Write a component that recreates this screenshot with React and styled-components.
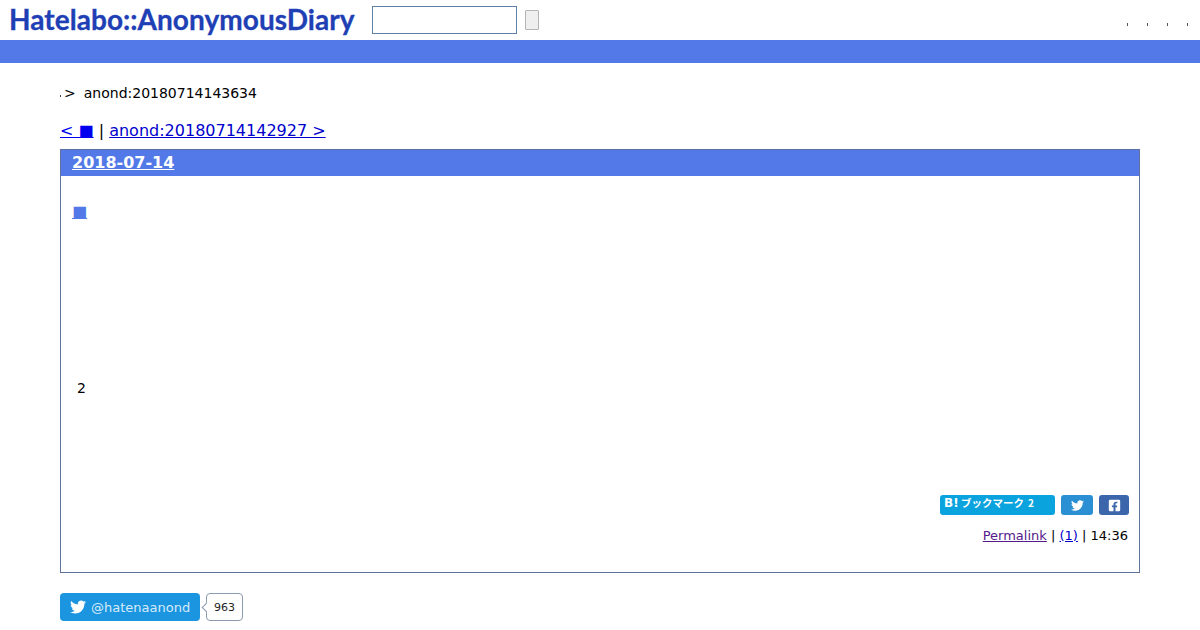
import React from "react";
import styled, { createGlobalStyle } from "styled-components";
import { FaTwitter, FaFacebookSquare } from "react-icons/fa";

const GlobalStyle = createGlobalStyle`
  html, body {
    margin: 0;
    padding: 0;
    background: #fff;
    color: #000;
    font-family: "DejaVu Sans", sans-serif;
    overflow: hidden;
  }
  a {
    text-decoration: none;
  }
`;

const Header = styled.header`
  display: flex;
  align-items: center;
  height: 40px;
  padding: 0 9px;
  box-sizing: border-box;
`;

const Logo = styled.h1`
  margin: 0 0 3px;
  width: 349px;
  font-family: "Lato", sans-serif;
  font-size: 28px;
  font-weight: 700;
  letter-spacing: 0.05px;
  white-space: nowrap;
  color: #1f3fb5;
  -webkit-text-stroke: 0.3px #1f3fb5;
`;

const SearchForm = styled.form`
  display: flex;
  align-items: center;
  margin-left: 14px;
`;

const SearchInput = styled.input`
  width: 145px;
  height: 28px;
  box-sizing: border-box;
  border: 1px solid #5e7fa8;
  background: #fff;
  padding: 0;
`;

const SearchButton = styled.button`
  width: 14px;
  height: 20px;
  margin-left: 8px;
  padding: 0;
  border: 1px solid #b4b4b4;
  border-radius: 1px;
  background: #efefef;
`;

const UserLinks = styled.ul`
  display: flex;
  gap: 19px;
  margin: 8px 3px 0 auto;
  padding: 0;
  list-style: none;
`;

const UserDot = styled.li`
  width: 1px;
  height: 3px;
  background: #555;
`;

const Bar = styled.div`
  height: 23px;
  background: #5279e7;
`;

const Main = styled.main`
  padding: 0 60px;
`;

const Crumbs = styled.div`
  display: flex;
  align-items: center;
  height: 20px;
  margin-top: 20px;
  font-size: 14px;
`;

const CrumbDot = styled.span`
  width: 1px;
  height: 2px;
  margin-top: 6px;
  background: #444;
`;

const CrumbSep = styled.span`
  margin: 0 8px 0 3px;
`;

const Pager = styled.div`
  height: 20px;
  margin-top: 17px;
  margin-bottom: 9px;
  padding-top: 1px;
  box-sizing: border-box;
  font-size: 16px;
  line-height: 20px;
  color: #000;
`;

const Link = styled.a`
  color: ${(p) => (p.$visited ? "#551a8b" : p.$plain ? "#0000cc" : "#0000ee")};
  text-decoration: underline;
`;

const Day = styled.section`
  display: flex;
  flex-direction: column;
  height: 424px;
  box-sizing: border-box;
  border: 1px solid #5e7399;
`;

const DayTitle = styled.h2`
  margin: 0;
  height: 26px;
  padding: 0 11px;
  background: #5279e7;
  font-size: 16px;
  font-weight: 700;
  line-height: 26px;
`;

const DayLink = styled.a`
  color: #fff;
  text-decoration: underline;
`;

const Body = styled.div`
  flex: 1;
  display: flex;
  flex-direction: column;
  padding: 0 11px;
`;

const EntryTitle = styled.h3`
  margin: 26px 0 0;
  height: 20px;
  font-size: 16px;
  font-weight: 400;
  line-height: 20px;
`;

const EntryLink = styled.a`
  color: #5279e7;
  text-decoration: underline;
`;

const EntryText = styled.p`
  margin: 156px 0 0 5px;
  height: 20px;
  font-size: 14px;
  line-height: 20px;
`;

const Share = styled.div`
  display: flex;
  justify-content: flex-end;
  gap: 6px;
  margin: 97px -1px 0 0;
`;

const BookmarkButton = styled.a`
  display: block;
  width: 115px;
  height: 20px;
  box-sizing: border-box;
  padding-left: 4px;
  border-radius: 3px;
  background: #0aa3dd;
  color: #fff;
  font-family: "Noto Sans CJK JP", sans-serif;
  font-size: 10.5px;
  font-weight: 700;
  line-height: 15px;
  white-space: nowrap;
`;

const BookmarkMark = styled.span`
  font-family: "DejaVu Sans", sans-serif;
  font-size: 12px;
`;

const BookmarkCount = styled.span`
  margin-left: 4px;
  font-size: 10px;
`;

const ShareButton = styled.a`
  display: flex;
  align-items: center;
  justify-content: center;
  width: ${(p) => p.$width}px;
  height: 20px;
  border-radius: 3px;
  background: ${(p) => p.$bg};
  color: #fff;
  font-size: 13px;
`;

const Footer = styled.div`
  margin-top: 11px;
  text-align: right;
  font-size: 13px;
  line-height: 20px;
`;

const Follow = styled.div`
  display: flex;
  align-items: center;
  margin-top: 20px;
`;

const FollowButton = styled.a`
  display: flex;
  align-items: center;
  gap: 5px;
  width: 140px;
  height: 28px;
  box-sizing: border-box;
  padding-left: 10px;
  border-radius: 4px;
  background: #1b95e0;
  color: #fff;
  font-size: 13px;
`;

const FollowName = styled.span`
  color: #d6ebf9;
`;

const FollowCount = styled.span`
  position: relative;
  display: flex;
  align-items: center;
  justify-content: center;
  width: 37px;
  height: 28px;
  box-sizing: border-box;
  margin-left: 6px;
  border: 1px solid #8a9bb0;
  border-radius: 4px;
  background: #fff;
  color: #222;
  font-size: 11px;
  &::before {
    content: "";
    position: absolute;
    left: -4px;
    top: 10px;
    width: 6px;
    height: 6px;
    background: #fff;
    border-left: 1px solid #8a9bb0;
    border-bottom: 1px solid #8a9bb0;
    transform: rotate(45deg);
  }
`;

export default function App() {
  return (
    <>
      <GlobalStyle />
      <Header>
        <Logo>Hatelabo::AnonymousDiary</Logo>
        <SearchForm>
          <SearchInput type="text" />
          <SearchButton type="button" />
        </SearchForm>
        <UserLinks>
          <UserDot />
          <UserDot />
          <UserDot />
          <UserDot />
        </UserLinks>
      </Header>
      <Bar />
      <Main>
        <Crumbs>
          <CrumbDot />
          <CrumbSep>&gt;</CrumbSep>
          <span>anond:20180714143634</span>
        </Crumbs>
        <Pager>
          <Link href="#">&lt; ■</Link> | <Link href="#" $plain>anond:20180714142927 &gt;</Link>
        </Pager>
        <Day>
          <DayTitle>
            <DayLink href="#">2018-07-14</DayLink>
          </DayTitle>
          <Body>
            <EntryTitle>
              <EntryLink href="#">■</EntryLink>
            </EntryTitle>
            <EntryText>2</EntryText>
            <Share>
              <BookmarkButton href="#">
                <BookmarkMark>B!</BookmarkMark> ブックマーク<BookmarkCount>2</BookmarkCount>
              </BookmarkButton>
              <ShareButton href="#" $width={32} $bg="#2a90d3">
                <FaTwitter />
              </ShareButton>
              <ShareButton href="#" $width={30} $bg="#3b66ab">
                <FaFacebookSquare />
              </ShareButton>
            </Share>
            <Footer>
              <Link href="#" $visited>Permalink</Link> | <Link href="#" $plain>(1)</Link> | 14:36
            </Footer>
          </Body>
        </Day>
        <Follow>
          <FollowButton href="#">
            <FaTwitter size={16} />
            <FollowName>@hatenaanond</FollowName>
          </FollowButton>
          <FollowCount>963</FollowCount>
        </Follow>
      </Main>
    </>
  );
}
